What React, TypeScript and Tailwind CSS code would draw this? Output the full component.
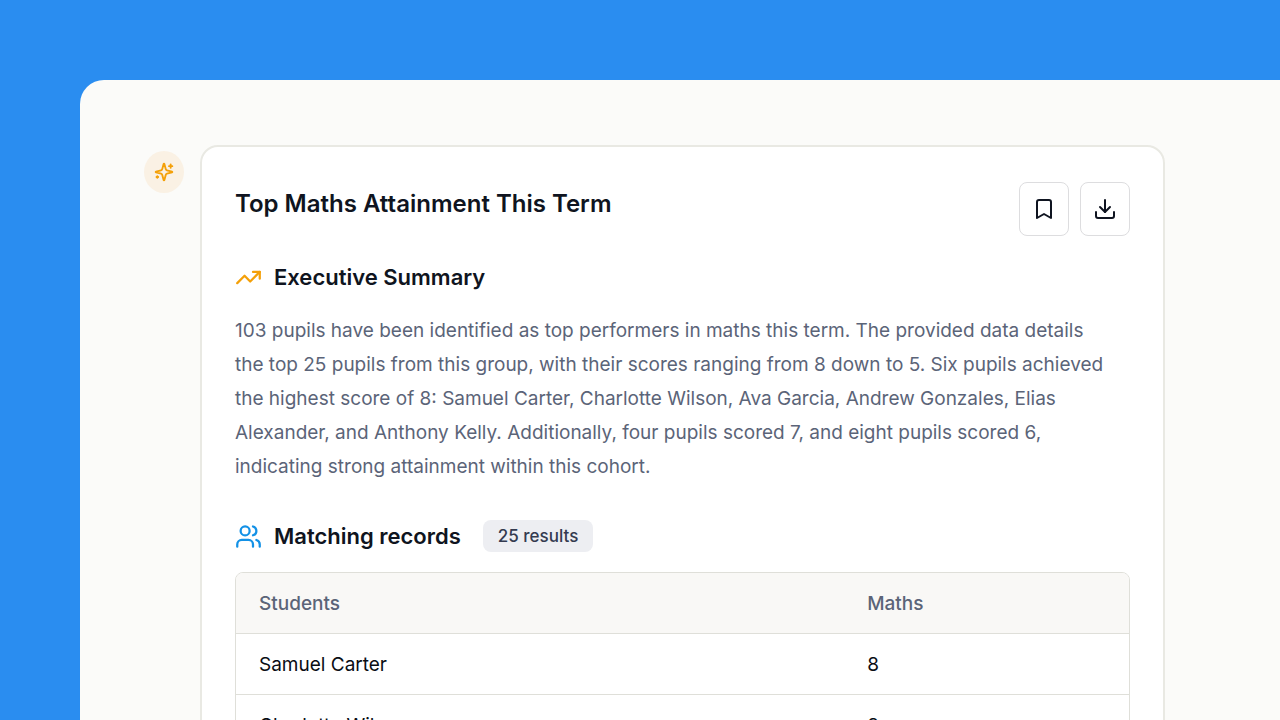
import { ReactNode } from 'react';
import { Bookmark, Download, TrendingUp, Users } from 'lucide-react';

interface Pupil {
  name: string;
  maths: number;
}

const pupils: Pupil[] = [
  { name: 'Samuel Carter', maths: 8 },
  { name: 'Charlotte Wilson', maths: 8 },
  { name: 'Ava Garcia', maths: 8 },
  { name: 'Andrew Gonzales', maths: 8 },
  { name: 'Elias Alexander', maths: 8 },
  { name: 'Anthony Kelly', maths: 8 },
];

const SparklesIcon = () => (
  <svg
    width="20"
    height="20"
    viewBox="0 0 24 24"
    fill="none"
    stroke="currentColor"
    strokeWidth="2.2"
    strokeLinecap="round"
    strokeLinejoin="round"
    aria-hidden="true"
  >
    <path d="M9.937 15.5A2 2 0 0 0 8.5 14.063l-6.135-1.582a.5.5 0 0 1 0-.962L8.5 9.936A2 2 0 0 0 9.937 8.5l1.582-6.135a.5.5 0 0 1 .963 0L14.063 8.5A2 2 0 0 0 15.5 9.937l6.135 1.581a.5.5 0 0 1 0 .964L15.5 14.063a2 2 0 0 0-1.437 1.437l-1.582 6.135a.5.5 0 0 1-.963 0z" />
    <path d="M20 3v4" />
    <path d="M22 5h-4" />
    <path d="M4 17v2" />
    <path d="M5 18H3" />
  </svg>
);

interface ActionButtonProps {
  label: string;
  children: ReactNode;
}

const ActionButton = ({ label, children }: ActionButtonProps) => (
  <button
    type="button"
    aria-label={label}
    className="flex h-[54px] w-[50px] items-center justify-center rounded-lg border border-[#dddddf] bg-white text-[#0f1420]"
  >
    {children}
  </button>
);

interface SectionHeadingProps {
  icon: ReactNode;
  title: string;
}

const SectionHeading = ({ icon, title }: SectionHeadingProps) => (
  <div className="flex items-center gap-3">
    {icon}
    <h2 className="text-[22px] leading-8 font-semibold text-[#0f1420]">{title}</h2>
  </div>
);

const RecordsTable = () => (
  <div className="mt-5 overflow-hidden rounded-lg border border-[#dfdfd9]">
    <table className="w-full table-fixed text-left text-[19px]">
      <thead className="bg-[#f9f8f6] text-[#5b6478]">
        <tr className="h-[60px]">
          <th className="w-[68%] px-[23px] pt-[3px] font-medium">Students</th>
          <th className="px-6 pt-[3px] font-medium">Maths</th>
        </tr>
      </thead>
      <tbody className="text-[#0a0d14]">
        {pupils.map((pupil) => (
          <tr key={pupil.name} className="h-[61px] border-t border-[#dfdfd9]">
            <td className="px-[23px] pt-[3px]">{pupil.name}</td>
            <td className="px-6 pt-[3px]">{pupil.maths}</td>
          </tr>
        ))}
      </tbody>
    </table>
  </div>
);

export default function App() {
  return (
    <div className="h-screen overflow-hidden bg-[#2a8df0] pt-20 pl-20 font-['Inter',sans-serif]">
      <main className="flex min-h-full items-start gap-4 rounded-tl-3xl bg-[#fbfbf9] pt-[65px] pr-[115px] pl-16">
        <div className="mt-[6px] flex h-[42px] w-10 shrink-0 items-center justify-center rounded-[50%] bg-[#faf1e4] text-[#f4a008]">
          <SparklesIcon />
        </div>

        <article className="min-w-0 flex-1 rounded-[18px] border-2 border-[#e9e9e3] bg-white px-[33px] pt-[35px] pb-8">
          <header className="flex items-start justify-between">
            <h1 className="pt-1 text-2xl leading-9 font-semibold text-[#0f1420]">
              Top Maths Attainment This Term
            </h1>
            <div className="flex gap-[11px]">
              <ActionButton label="Save report">
                <Bookmark size={24} />
              </ActionButton>
              <ActionButton label="Download report">
                <Download size={24} />
              </ActionButton>
            </div>
          </header>

          <section className="mt-[25px]">
            <SectionHeading
              icon={<TrendingUp size={27} className="text-[#f4a008]" />}
              title="Executive Summary"
            />
            <p className="mt-[21px] pr-4 text-[19px] leading-[34px] text-[#5b6478]">
              103 pupils have been identified as top performers in maths this term. The provided data
              details the top 25 pupils from this group, with their scores ranging from 8 down to 5. Six
              pupils achieved the highest score of 8: Samuel Carter, Charlotte Wilson, Ava Garcia, Andrew
              Gonzales, Elias Alexander, and Anthony Kelly. Additionally, four pupils scored 7, and eight
              pupils scored 6, indicating strong attainment within this cohort.
            </p>
          </section>

          <section className="mt-9">
            <div className="flex items-center gap-[22px]">
              <SectionHeading
                icon={<Users size={27} className="text-[#1391e6]" />}
                title="Matching records"
              />
              <span className="rounded-lg bg-[#edeef2] px-[15px] text-[17px] leading-8 font-medium text-[#343b50]">
                25 results
              </span>
            </div>
            <RecordsTable />
          </section>
        </article>
      </main>
    </div>
  );
}
